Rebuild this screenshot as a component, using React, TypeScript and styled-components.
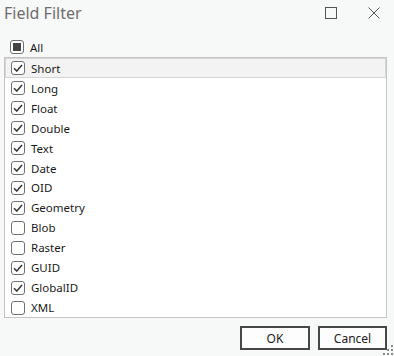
import styled, { createGlobalStyle } from "styled-components";

const GlobalStyle = createGlobalStyle`
  html, body {
    margin: 0;
    padding: 0;
    background: #f7f8f8;
  }
  * {
    box-sizing: border-box;
  }
`;

const Dialog = styled.div`
  width: 394px;
  height: 356px;
  background: #f7f8f8;
  font-family: "Segoe UI", "Noto Sans", "Open Sans", sans-serif;
  color: #1a1a1a;
  display: flex;
  flex-direction: column;
  position: relative;
  overflow: hidden;
`;

const TitleBar = styled.div`
  height: 30px;
  display: flex;
  align-items: center;
  padding-left: 4px;
`;

const Title = styled.div`
  flex: 1;
  font-size: 16px;
  color: #6e6e6e;
  margin-top: -4px;
`;

const WinButton = styled.div<{ $w: number }>`
  width: ${(p) => p.$w}px;
  height: 30px;
  display: flex;
  align-items: center;
  justify-content: center;
  margin-top: -4px;
`;

const AllRow = styled.label`
  display: flex;
  align-items: center;
  height: 20px;
  margin-top: 7px;
  padding-left: 10px;
  font-size: 11.5px;
`;

const ListBox = styled.div`
  margin: 0 7px 0 4px;
  border: 1px solid #c4c4c4;
  background: #fff;
  display: flex;
  flex-direction: column;
  height: 261px;
`;

const Row = styled.div<{ $selected?: boolean }>`
  height: 20px;
  display: flex;
  align-items: center;
  padding-left: 5px;
  padding-top: 1px;
  font-size: 11.5px;
  background: ${(p) => (p.$selected ? "#f3f3f3" : "transparent")};
  border: 1px solid ${(p) => (p.$selected ? "#d6d6d6" : "transparent")};
`;

const Box = styled.span`
  width: 14px;
  height: 14px;
  border: 1px solid #707070;
  border-radius: 3px;
  background: #fff;
  display: inline-flex;
  align-items: center;
  justify-content: center;
  margin-right: 6px;
  flex-shrink: 0;
`;

const Indeterminate = styled.span`
  width: 8px;
  height: 8px;
  background: #444;
`;

const Footer = styled.div`
  display: flex;
  justify-content: flex-end;
  gap: 8px;
  padding: 8px 7px 0 0;
`;

const Button = styled.button<{ $w: number }>`
  width: ${(p) => p.$w}px;
  height: 24px;
  border: 2px solid #474747;
  background: #fdfdfd;
  font-family: inherit;
  font-size: 12px;
  color: #222;
  padding: 0;
`;

const Grip = styled.svg`
  position: absolute;
  right: 1px;
  bottom: 1px;
`;

const Check = () => (
  <svg width="10" height="8" viewBox="0 0 10 8">
    <path d="M1 4.2 L3.8 7 L9 1" fill="none" stroke="#3a3a3a" strokeWidth="1.6" />
  </svg>
);

const fields: [string, boolean][] = [
  ["Short", true],
  ["Long", true],
  ["Float", true],
  ["Double", true],
  ["Text", true],
  ["Date", true],
  ["OID", true],
  ["Geometry", true],
  ["Blob", false],
  ["Raster", false],
  ["GUID", true],
  ["GlobalID", true],
  ["XML", false],
];

const App = () => {
  return (
    <Dialog>
      <GlobalStyle />
      <TitleBar>
        <Title>Field Filter</Title>
        <WinButton $w={44}>
          <svg width="12" height="12" viewBox="0 0 12 12">
            <rect x="0.5" y="0.5" width="11" height="11" fill="none" stroke="#555" />
          </svg>
        </WinButton>
        <WinButton $w={41}>
          <svg width="12" height="12" viewBox="0 0 12 12">
            <path d="M0.5 0.5 L11.5 11.5 M11.5 0.5 L0.5 11.5" stroke="#555" />
          </svg>
        </WinButton>
      </TitleBar>
      <AllRow>
        <Box>
          <Indeterminate />
        </Box>
        All
      </AllRow>
      <ListBox>
        {fields.map(([name, checked], i) => (
          <Row key={name} $selected={i === 0}>
            <Box>{checked && <Check />}</Box>
            {name}
          </Row>
        ))}
      </ListBox>
      <Footer>
        <Button $w={70}>OK</Button>
        <Button $w={69}>Cancel</Button>
      </Footer>
      <Grip width="10" height="10" viewBox="0 0 10 10">
        {[
          [8, 0],
          [8, 4],
          [4, 4],
          [8, 8],
          [4, 8],
          [0, 8],
        ].map(([x, y]) => (
          <rect key={`${x}-${y}`} x={x} y={y} width="2" height="2" fill="#8a8a8a" />
        ))}
      </Grip>
    </Dialog>
  );
};

export default App;
